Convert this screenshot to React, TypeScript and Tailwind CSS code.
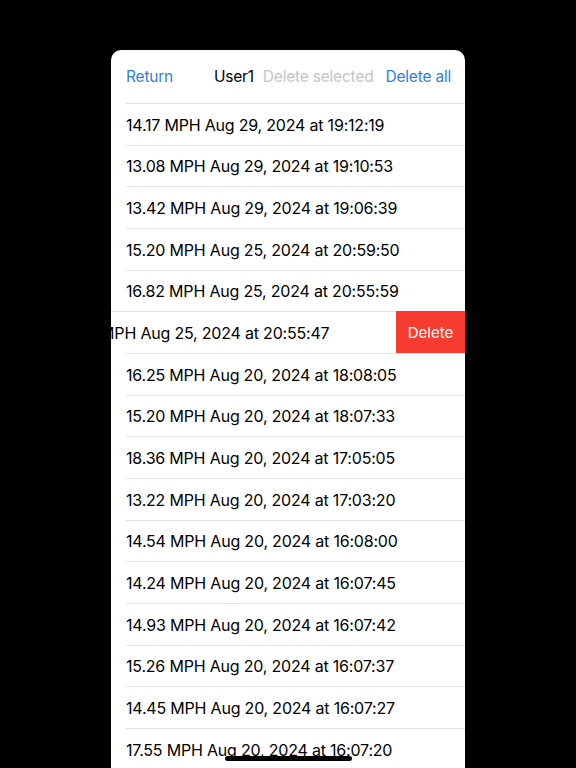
import { useState } from 'react'

interface Run {
  speed: string
  when: string
}

const runs: Run[] = [
  { speed: '14.17', when: 'Aug 29, 2024 at 19:12:19' },
  { speed: '13.08', when: 'Aug 29, 2024 at 19:10:53' },
  { speed: '13.42', when: 'Aug 29, 2024 at 19:06:39' },
  { speed: '15.20', when: 'Aug 25, 2024 at 20:59:50' },
  { speed: '16.82', when: 'Aug 25, 2024 at 20:55:59' },
  { speed: '16.82', when: 'Aug 25, 2024 at 20:55:47' },
  { speed: '16.25', when: 'Aug 20, 2024 at 18:08:05' },
  { speed: '15.20', when: 'Aug 20, 2024 at 18:07:33' },
  { speed: '18.36', when: 'Aug 20, 2024 at 17:05:05' },
  { speed: '13.22', when: 'Aug 20, 2024 at 17:03:20' },
  { speed: '14.54', when: 'Aug 20, 2024 at 16:08:00' },
  { speed: '14.24', when: 'Aug 20, 2024 at 16:07:45' },
  { speed: '14.93', when: 'Aug 20, 2024 at 16:07:42' },
  { speed: '15.26', when: 'Aug 20, 2024 at 16:07:37' },
  { speed: '14.45', when: 'Aug 20, 2024 at 16:07:27' },
  { speed: '17.55', when: 'Aug 20, 2024 at 16:07:20' },
]

export default function App() {
  // row that is swiped open to show its delete action
  const [swiped] = useState(5)

  return (
    <div
      className="relative h-[768px] w-[576px] overflow-hidden bg-black"
      style={{ fontFamily: 'Inter, "Noto Sans", sans-serif' }}
    >
      <div className="mx-auto mt-[50px] h-[760px] w-[354px] overflow-hidden rounded-t-[10px] bg-white">
        <div className="flex h-[53px] items-center pl-[15px] pr-[14px] text-[15.5px] tracking-[-0.2px]">
          <span className="text-[#2f7fdc]">Return</span>
          <span className="ml-auto text-black">User1</span>
          <span className="ml-[9px] text-[#c4c4c6]">Delete selected</span>
          <span className="ml-[12px] text-[#2f7fdc]">Delete all</span>
        </div>
        <div>
          {runs.map((run, i) => (
            <div key={i} className="relative h-[41.67px] overflow-hidden">
              <div
                className={`flex h-full items-center pl-[15px] ${i === swiped ? '-translate-x-[69px]' : ''}`}
              >
                <div className="flex h-full flex-1 items-center whitespace-nowrap border-t border-[#e4e4e6] pt-px text-[16px] tracking-[-0.2px] text-black">
                  {run.speed} MPH {run.when}
                </div>
              </div>
              {i === swiped && (
                <div className="absolute inset-y-0 right-0 flex w-[69px] items-center justify-center bg-[#f63b30] pt-[2px] text-[15px] text-white">
                  Delete
                </div>
              )}
            </div>
          ))}
        </div>
      </div>
      <div className="absolute bottom-[7px] left-[225px] h-[5px] w-[127px] rounded-full bg-black" />
    </div>
  )
}
